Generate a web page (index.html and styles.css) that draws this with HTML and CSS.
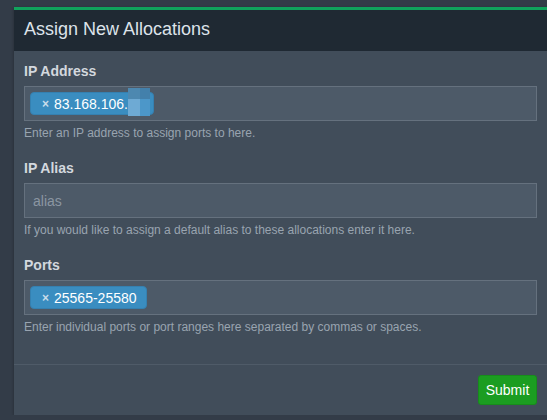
FILE: index.html
```html
<!DOCTYPE html>
<html>
<head>
<meta charset="utf-8">
<link rel="stylesheet" href="styles.css">
</head>
<body>
<div class="page">
  <div class="modal">
    <div class="modal-header">Assign New Allocations</div>
    <div class="modal-body">
      <div class="group">
        <label class="label">IP Address</label>
        <div class="input tags">
          <span class="tag"><span class="x">×</span>83.168.106.<span class="blur"><i class="b1"></i><i class="b2"></i><i class="b3"></i><i class="b4"></i></span></span>
        </div>
        <p class="help">Enter an IP address to assign ports to here.</p>
      </div>
      <div class="group">
        <label class="label">IP Alias</label>
        <div class="input"><span class="placeholder">alias</span></div>
        <p class="help">If you would like to assign a default alias to these allocations enter it here.</p>
      </div>
      <div class="group">
        <label class="label">Ports</label>
        <div class="input tags">
          <span class="tag"><span class="x">×</span>25565-25580</span>
        </div>
        <p class="help">Enter individual ports or port ranges here separated by commas or spaces.</p>
      </div>
    </div>
    <div class="modal-footer">
      <button class="btn">Submit</button>
    </div>
  </div>
</div>
</body>
</html>
```
FILE: styles.css
```css
html, body {
  margin: 0;
  padding: 0;
  background: #333c48;
  font-family: "Liberation Sans", Arial, sans-serif;
  overflow: hidden;
}
.page {
  padding: 7px 0 0 14px;
}
.modal {
  width: 533px;
  background: #414d5a;
  border-top: 3px solid #10a35c;
  box-shadow: 0 1px 3px rgba(0,0,0,0.3);
}
.modal-header {
  background: #1f2933;
  color: #dde3ea;
  font-size: 18px;
  height: 41px;
  line-height: 39px;
  padding: 0 10px;
  box-sizing: border-box;
}
.modal-body {
  padding: 10px 10px 13px;
}
.group {
  margin-bottom: 16px;
}
.group:last-child {
  margin-bottom: 15px;
}
.label {
  display: block;
  color: #d3d8de;
  font-weight: bold;
  font-size: 14px;
  line-height: 20px;
  margin-bottom: 5px;
}
.input {
  height: 35px;
  box-sizing: border-box;
  background: #4d5a68;
  border: 1px solid #65717e;
  display: flex;
  align-items: center;
  padding: 0 5px;
}
.placeholder {
  color: #8b96a2;
  font-size: 14px;
  padding-left: 3px;
}
.tag {
  display: inline-flex;
  align-items: center;
  height: 23px;
  box-sizing: border-box;
  background: #3a8dc0;
  border: 1px solid #3580b0;
  border-radius: 4px;
  color: #ffffff;
  font-size: 14px;
  padding: 0 9px 0 11px;
  position: relative;
}
.tag .x {
  color: #c8dcea;
  font-weight: bold;
  font-size: 12px;
  margin-right: 5px;
}
.blur {
  display: inline-grid;
  grid-template-columns: 12px 10px;
  grid-template-rows: 11px 17px;
  position: relative;
  top: -2px;
  margin-left: 0;
  margin-right: -6px;
  width: 22px;
  height: 28px;
}
.blur i { display: block; }
.b1 { background: #4d88b0; }
.b2 { background: #4380ab; }
.b3 { background: #6eaad4; }
.b4 { background: #4c97c9; }
.help {
  margin: 4px 0 0;
  color: #99a4b0;
  font-size: 12px;
  line-height: 17px;
}
.modal-footer {
  border-top: 1px solid #4f5b68;
  padding: 10px;
  display: flex;
  justify-content: flex-end;
}
.btn {
  width: 59px;
  height: 30px;
  background: #1b9d21;
  border: 1px solid #178c1c;
  border-radius: 3px;
  color: #ffffff;
  font-family: "Liberation Sans", Arial, sans-serif;
  font-size: 14px;
  padding: 0;
}
```
